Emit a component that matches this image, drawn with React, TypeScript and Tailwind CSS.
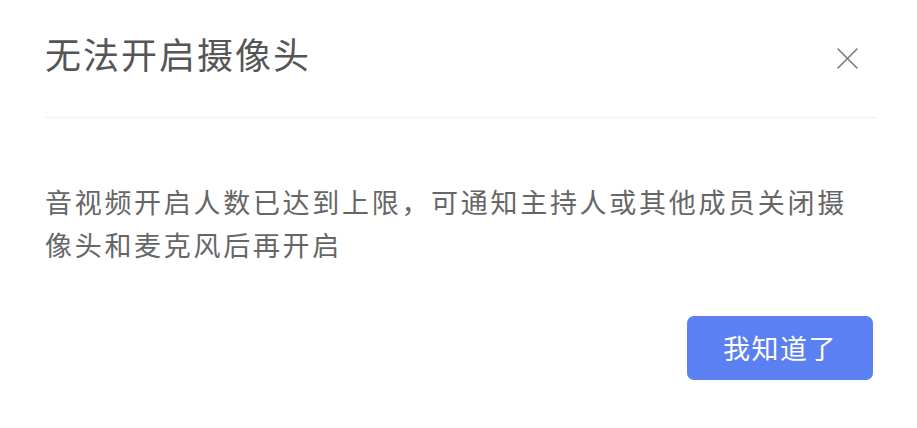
import React from "react";

const FONT = "font-['Noto_Sans_CJK_SC','Noto_Sans',sans-serif]";

// 关闭按钮的 X
function CloseIcon() {
  return (
    <svg width="21" height="21" viewBox="0 0 21 21" fill="none">
      <path d="M1 1L20 20M20 1L1 20" stroke="#7a7a7a" strokeWidth="1.6" strokeLinecap="round" />
    </svg>
  );
}

const App: React.FC = () => {
  return (
    <div className={`w-[917px] h-[428px] bg-white pl-[45px] pr-[41px] ${FONT}`}>
      {/* 标题栏 */}
      <div className="h-[118px] flex items-start justify-between border-b border-[#efefef]">
        <h2 className="mt-[25px] text-[36px] leading-[56px] tracking-[2px] text-[#555555] font-normal">
          无法开启摄像头
        </h2>
        <button className="mt-[48px] mr-[18px] w-[21px] h-[21px] flex items-center justify-center">
          <CloseIcon />
        </button>
      </div>

      {/* 内容 */}
      <p className="mt-[62px] w-[820px] text-[27px] leading-[43px] tracking-[2.7px] text-[#666666]">
        音视频开启人数已达到上限，可通知主持人或其他成员关闭摄像头和麦克风后再开启
      </p>

      <div className="flex justify-end mt-[50px] pr-[3px]">
        <button className="w-[186px] h-[64px] rounded-[7px] bg-[#5a80f1] text-white text-[27px] tracking-[1.5px] flex items-center justify-center">
          我知道了
        </button>
      </div>
    </div>
  );
};

export default App;
